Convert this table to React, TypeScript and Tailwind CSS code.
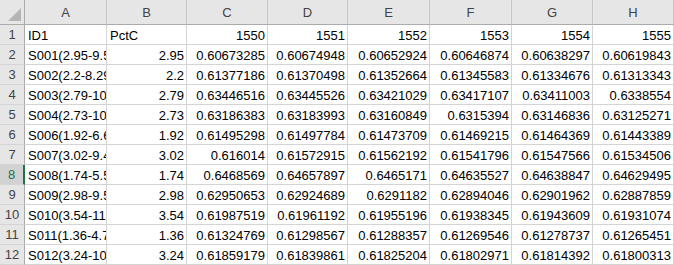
import React from "react";

const columns = ["A", "B", "C", "D", "E", "F", "G", "H"];

// widths measured off the sheet, row header first
const gridCols = "grid grid-cols-[25px_82px_80px_81px_80px_82px_82px_81px_81px]";

const rows: (string | number)[][] = [
  ["ID1", "PctC", "1550", "1551", "1552", "1553", "1554", "1555"],
  ["S001(2.95-9.54)", "2.95", "0.60673285", "0.60674948", "0.60652924", "0.60646874", "0.60638297", "0.60619843"],
  ["S002(2.2-8.29)", "2.2", "0.61377186", "0.61370498", "0.61352664", "0.61345583", "0.61334676", "0.61313343"],
  ["S003(2.79-10.1)", "2.79", "0.63446516", "0.63445526", "0.63421029", "0.63417107", "0.63411003", "0.6338554"],
  ["S004(2.73-10.4)", "2.73", "0.63186383", "0.63183993", "0.63160849", "0.6315394", "0.63146836", "0.63125271"],
  ["S006(1.92-6.61)", "1.92", "0.61495298", "0.61497784", "0.61473709", "0.61469215", "0.61464369", "0.61443389"],
  ["S007(3.02-9.47)", "3.02", "0.616014", "0.61572915", "0.61562192", "0.61541796", "0.61547566", "0.61534506"],
  ["S008(1.74-5.53)", "1.74", "0.6468569", "0.64657897", "0.6465171", "0.64635527", "0.64638847", "0.64629495"],
  ["S009(2.98-9.52)", "2.98", "0.62950653", "0.62924689", "0.6291182", "0.62894046", "0.62901962", "0.62887859"],
  ["S010(3.54-11.2)", "3.54", "0.61987519", "0.61961192", "0.61955196", "0.61938345", "0.61943609", "0.61931074"],
  ["S011(1.36-4.72)", "1.36", "0.61324769", "0.61298567", "0.61288357", "0.61269546", "0.61278737", "0.61265451"],
  ["S012(3.24-10.3)", "3.24", "0.61859179", "0.61839861", "0.61825204", "0.61802971", "0.61814392", "0.61800313"],
];

const SELECTED_ROW = 8;

const Corner = () => (
  <div className="h-[25px] bg-[#e6e6e6] border-r border-b border-[#ababab] flex items-end justify-end p-[3px]">
    <svg width="13" height="13" viewBox="0 0 13 13">
      <polygon points="13,0 13,13 0,13" fill="#b4b4b4" />
    </svg>
  </div>
);

const App = () => {
  return (
    <div className="w-[674px] h-[265px] overflow-hidden bg-white font-['Liberation_Sans',Arial,sans-serif] text-[13px] text-black">
      {/* column letters */}
      <div className={gridCols}>
        <Corner />
        {columns.map((c) => (
          <div
            key={c}
            className="h-[25px] bg-[#e6e6e6] border-r border-b border-r-[#c6c6c6] border-b-[#ababab] flex items-center justify-center pt-[1px] text-[#444444]"
          >
            {c}
          </div>
        ))}
      </div>

      {/* data rows */}
      {rows.map((row, i) => {
        const n = i + 1;
        const selected = n === SELECTED_ROW;
        return (
          <div key={n} className={gridCols}>
            <div
              className={`h-[20px] border-b border-[#d4d4d4] flex items-center justify-center leading-none ${
                selected
                  ? "bg-[#d2d2d2] text-[#217346] border-r-2 border-r-[#217346]"
                  : "bg-[#e6e6e6] text-[#444444] border-r border-r-[#ababab]"
              }`}
            >
              {n}
            </div>
            {row.map((cell, j) => {
              // first row is text headers, col A is text; the rest are numbers
              const isText = n === 1 ? j < 2 : j === 0;
              return (
                <div
                  key={j}
                  className={`h-[20px] border-r border-b border-[#d4d4d4] overflow-hidden whitespace-nowrap flex items-center leading-none pt-[1px] ${
                    isText ? "justify-start pl-[3px]" : "justify-end pr-[2px]"
                  }`}
                >
                  {cell}
                </div>
              );
            })}
          </div>
        );
      })}
    </div>
  );
};

export default App;
